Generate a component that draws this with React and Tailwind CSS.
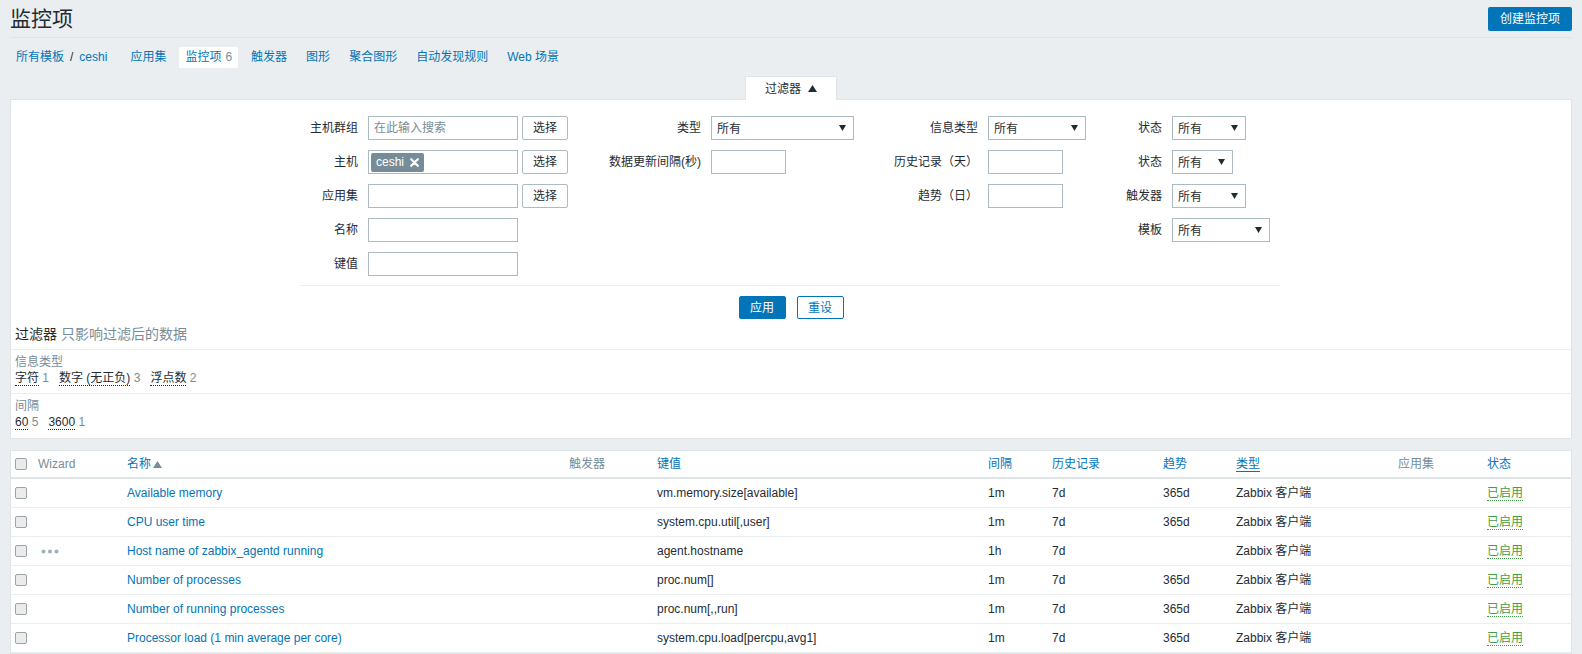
import React from "react";

const Arrow = () => (
  <svg width="7" height="6" viewBox="0 0 7 6" className="absolute right-[7px] top-[8px]">
    <polygon points="0,0 7,0 3.5,6" fill="#1f2c33" />
  </svg>
);

function Select({ w }) {
  return (
    <div className={`relative h-[24px] border border-[#acbbc2] bg-white pl-[5px] flex items-center ${w}`}>
      <span className="pt-[2px]">所有</span>
      <Arrow />
    </div>
  );
}

function Input({ w, children }) {
  return (
    <div className={`h-[24px] border border-[#acbbc2] bg-white flex items-center ${w}`}>{children}</div>
  );
}

function PickBtn() {
  return (
    <div className="ml-[4px] w-[46px] h-[24px] border border-[#acbbc2] rounded-[2px] bg-white flex items-center justify-center">
      选择
    </div>
  );
}

function Row({ label, lw, children }) {
  return (
    <div className="flex items-center h-[24px]">
      <div className={`shrink-0 pr-[10px] text-right whitespace-nowrap ${lw}`}>{label}</div>
      {children}
    </div>
  );
}

function Checkbox() {
  return <div className="w-[12px] h-[12px] border border-[#9aa3a8] rounded-[2px] bg-[#ebebeb]" />;
}

const rows = [
  ["Available memory", "vm.memory.size[available]", "1m", "7d", "365d", false],
  ["CPU user time", "system.cpu.util[,user]", "1m", "7d", "365d", false],
  ["Host name of zabbix_agentd running", "agent.hostname", "1h", "7d", "", true],
  ["Number of processes", "proc.num[]", "1m", "7d", "365d", false],
  ["Number of running processes", "proc.num[,,run]", "1m", "7d", "365d", false],
  ["Processor load (1 min average per core)", "system.cpu.load[percpu,avg1]", "1m", "7d", "365d", false],
];

const grid =
  "grid grid-cols-[22px_89px_442px_88px_331px_64px_111px_73px_162px_89px_89px] items-center";

export default function App() {
  return (
    <div className="bg-[#ebeef0] min-h-[654px] font-['Liberation_Sans','Noto_Sans_CJK_SC',sans-serif] text-[12px] text-[#1f2c33] leading-[16px]">
      {/* Header */}
      <div className="mx-[10px] h-[38px] flex items-center justify-between border-b border-[#dfe4e7]">
        <h1 className="text-[21px] leading-none font-normal">监控项</h1>
        <button className="h-[24px] px-[12px] rounded-[2px] bg-[#0275b8] text-white text-[12px]">创建监控项</button>
      </div>

      {/* Nav */}
      <div className="mx-[10px] h-[38px] flex items-center gap-[7px] text-[#0275b8]">
        <div className="h-[21px] px-[6px] flex items-center">
          <span>所有模板</span>
          <span className="mx-[6px] text-[#1f2c33]">/</span>
          <span>ceshi</span>
        </div>
        <div className="h-[21px] px-[6px] flex items-center ml-[4px]">应用集</div>
        <div className="h-[21px] px-[6px] flex items-center bg-white rounded-[2px]">
          监控项<span className="ml-[4px] text-[#768d99]">6</span>
        </div>
        <div className="h-[21px] px-[6px] flex items-center">触发器</div>
        <div className="h-[21px] px-[6px] flex items-center">图形</div>
        <div className="h-[21px] px-[6px] flex items-center">聚合图形</div>
        <div className="h-[21px] px-[6px] flex items-center">自动发现规则</div>
        <div className="h-[21px] px-[6px] flex items-center">Web 场景</div>
      </div>

      {/* Filter tab */}
      <div className="flex justify-center">
        <div className="relative z-10 -mb-px w-[92px] h-[24px] bg-white border-t border-x border-[#dfe4e7] flex items-center justify-center gap-[7px]">
          <span>过滤器</span>
          <svg width="9" height="7" viewBox="0 0 9 7">
            <polygon points="4.5,0 9,7 0,7" fill="#1f2c33" />
          </svg>
        </div>
      </div>

      {/* Filter panel */}
      <div className="mx-[10px] bg-white border border-[#dfe4e7]">
        <div className="pt-[16px] flex ml-[289px]">
          <div className="flex flex-col gap-[10px] w-[268px]">
            <Row label="主机群组" lw="w-[68px]">
              <Input w="w-[150px]">
                <span className="pl-[5px] text-[#768d99]">在此输入搜索</span>
              </Input>
              <PickBtn />
            </Row>
            <Row label="主机" lw="w-[68px]">
              <Input w="w-[150px]">
                <span className="ml-[2px] h-[19px] pl-[5px] pr-[5px] rounded-[2px] bg-[#768d99] text-white flex items-center gap-[6px]">
                  ceshi
                  <svg width="9" height="9" viewBox="0 0 9 9">
                    <path d="M1.2 1.2 L7.8 7.8 M7.8 1.2 L1.2 7.8" stroke="#ffffff" strokeWidth="2.2" strokeLinecap="round" />
                  </svg>
                </span>
              </Input>
              <PickBtn />
            </Row>
            <Row label="应用集" lw="w-[68px]">
              <Input w="w-[150px]" />
              <PickBtn />
            </Row>
            <Row label="名称" lw="w-[68px]">
              <Input w="w-[150px]" />
            </Row>
            <Row label="键值" lw="w-[68px]">
              <Input w="w-[150px]" />
            </Row>
          </div>
          <div className="flex flex-col gap-[10px] w-[286px]">
            <Row label="类型" lw="w-[143px]">
              <Select w="w-[143px]" />
            </Row>
            <Row label="数据更新间隔(秒)" lw="w-[143px]">
              <Input w="w-[75px]" />
            </Row>
          </div>
          <div className="flex flex-col gap-[10px] w-[232px]">
            <Row label="信息类型" lw="w-[134px]">
              <Select w="w-[98px]" />
            </Row>
            <Row label="历史记录（天）" lw="w-[134px]">
              <Input w="w-[75px]" />
            </Row>
            <Row label="趋势（日）" lw="w-[134px]">
              <Input w="w-[75px]" />
            </Row>
          </div>
          <div className="flex flex-col gap-[10px] w-[184px]">
            <Row label="状态" lw="w-[86px]">
              <Select w="w-[74px]" />
            </Row>
            <Row label="状态" lw="w-[86px]">
              <Select w="w-[61px]" />
            </Row>
            <Row label="触发器" lw="w-[86px]">
              <Select w="w-[74px]" />
            </Row>
            <Row label="模板" lw="w-[86px]">
              <Select w="w-[98px]" />
            </Row>
          </div>
        </div>
        <div className="mt-[9px] ml-[289px] w-[980px] border-t border-[#ebeef0]" />
        <div className="mt-[10px] flex justify-center gap-[11px]">
          <button className="w-[47px] h-[23px] rounded-[2px] bg-[#0275b8] border border-[#0275b8] text-white">应用</button>
          <button className="w-[47px] h-[23px] rounded-[2px] bg-white border border-[#0275b8] text-[#0275b8]">重设</button>
        </div>

        {/* Subfilter */}
        <div className="mt-[6px] pl-[4px] pb-[6px] text-[14px] leading-[18px] border-b border-[#ebeef0]">
          过滤器 <span className="text-[#768d99]">只影响过滤后的数据</span>
        </div>
        <div className="pl-[4px] pt-[4px] pb-[7px] border-b border-[#ebeef0]">
          <div className="text-[#768d99]">信息类型</div>
          <div className="flex gap-[10px]">
            <span>
              <span className="border-b border-dotted border-[#1f2c33]">字符</span>
              <span className="text-[#768d99]"> 1</span>
            </span>
            <span>
              <span className="border-b border-dotted border-[#1f2c33]">数字 (无正负)</span>
              <span className="text-[#768d99]"> 3</span>
            </span>
            <span>
              <span className="border-b border-dotted border-[#1f2c33]">浮点数</span>
              <span className="text-[#768d99]"> 2</span>
            </span>
          </div>
        </div>
        <div className="pl-[4px] pt-[4px] pb-[8px]">
          <div className="text-[#768d99]">间隔</div>
          <div className="flex gap-[10px]">
            <span>
              <span className="border-b border-dotted border-[#1f2c33]">60</span>
              <span className="text-[#768d99]"> 5</span>
            </span>
            <span>
              <span className="border-b border-dotted border-[#1f2c33]">3600</span>
              <span className="text-[#768d99]"> 1</span>
            </span>
          </div>
        </div>
      </div>

      {/* Table */}
      <div className="mx-[10px] mt-[11px] bg-white border border-[#dfe4e7]">
        <div className={`${grid} h-[28px] border-b-2 border-[#dfe4e7]`}>
          <div className="pl-[4px]"><Checkbox /></div>
          <div className="pl-[5px] text-[#768d99]">Wizard</div>
          <div className="pl-[5px] flex items-center gap-[2px]">
            <span className="text-[#0275b8]">名称</span>
            <svg width="9" height="7" viewBox="0 0 9 7">
              <polygon points="4.5,0 9,7 0,7" fill="#768d99" />
            </svg>
          </div>
          <div className="pl-[5px] text-[#768d99]">触发器</div>
          <div className="pl-[5px] text-[#0275b8]">键值</div>
          <div className="pl-[5px] text-[#0275b8]">间隔</div>
          <div className="pl-[5px] text-[#0275b8]">历史记录</div>
          <div className="pl-[5px] text-[#0275b8]">趋势</div>
          <div className="pl-[5px] text-[#0275b8]"><span className="border-b border-[#0275b8]">类型</span></div>
          <div className="pl-[5px] text-[#768d99]">应用集</div>
          <div className="pl-[5px] text-[#0275b8]">状态</div>
        </div>
        {rows.map((r, i) => (
          <div key={i} className={`${grid} h-[29px] border-b border-[#ebeef0]`}>
            <div className="pl-[4px]"><Checkbox /></div>
            <div className="pl-[8px]">
              {r[5] && (
                <svg width="18" height="5" viewBox="0 0 18 5">
                  <circle cx="2.5" cy="2.5" r="2" fill="#9fb0b9" />
                  <circle cx="9" cy="2.5" r="2" fill="#9fb0b9" />
                  <circle cx="15.5" cy="2.5" r="2" fill="#9fb0b9" />
                </svg>
              )}
            </div>
            <div className="pl-[5px] text-[#0275b8] whitespace-nowrap">{r[0]}</div>
            <div className="pl-[5px]"></div>
            <div className="pl-[5px] whitespace-nowrap">{r[1]}</div>
            <div className="pl-[5px]">{r[2]}</div>
            <div className="pl-[5px]">{r[3]}</div>
            <div className="pl-[5px]">{r[4]}</div>
            <div className="pl-[5px] whitespace-nowrap">Zabbix 客户端</div>
            <div className="pl-[5px]"></div>
            <div className="pl-[5px]">
              <span className="text-[#429e47] border-b border-dotted border-[#429e47]">已启用</span>
            </div>
          </div>
        ))}
      </div>
    </div>
  );
}
